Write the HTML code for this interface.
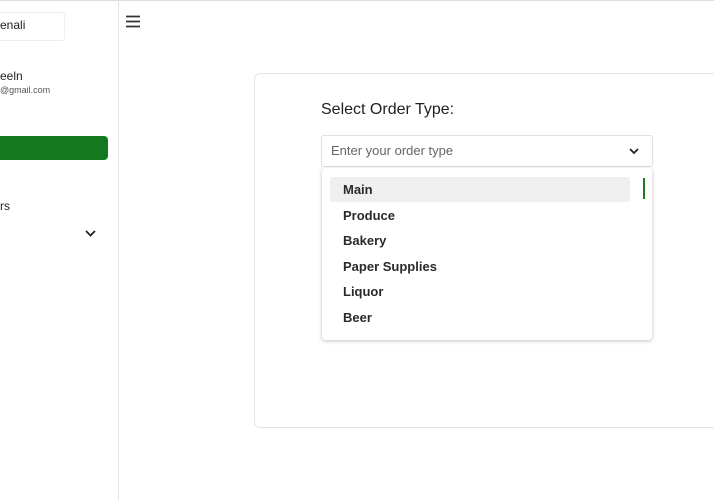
<!DOCTYPE html>
<html><head><style>
body{margin:0;width:714px;height:500px;background:#fff;font-family:"Liberation Sans",sans-serif;position:relative;overflow:hidden;color:#222}
.a{position:absolute}
</style></head><body>
<div class="a" style="left:0;top:0;width:714px;height:1px;background:#ddd"></div>
<div class="a" style="left:118px;top:0;width:1px;height:500px;background:#e2e2e2"></div>
<div class="a" style="left:-10px;top:12px;width:73px;height:27px;border:1px solid #eee;border-radius:3px"></div>
<div class="a" style="left:0;top:18px;font-size:12px">enali</div>
<div class="a" style="left:0;top:69px;font-size:12px">eeln</div>
<div class="a" style="left:0;top:85px;font-size:9px;color:#555">@gmail.com</div>
<div class="a" style="left:-10px;top:136px;width:118px;height:24px;background:#13781e;border-radius:4px"></div>
<div class="a" style="left:0;top:199px;font-size:12px">rs</div>
<svg class="a" style="left:84px;top:229px" width="13" height="9"><path d="M2 2l4.5 4.5L11 2" stroke="#222" stroke-width="1.8" fill="none"/></svg>
<svg class="a" style="left:126px;top:15px" width="15" height="13"><path d="M0 1.5h14M0 6.5h14M0 11.5h14" stroke="#333" stroke-width="1.8"/></svg>
<div class="a" style="left:254px;top:73px;width:480px;height:353px;border:1px solid #e4e4e4;border-radius:6px"></div>
<div class="a" style="left:321px;top:101px;font-size:16px;color:#222">Select Order Type:</div>
<div class="a" style="left:321px;top:135px;width:330px;height:30px;border:1px solid #e0e0e0;border-radius:3px"></div>
<div class="a" style="left:331px;top:143px;font-size:13px;color:#666">Enter your order type</div>
<svg class="a" style="left:628px;top:147px" width="12" height="8"><path d="M2 2l4 4 4-4" stroke="#222" stroke-width="1.8" fill="none"/></svg>
<div class="a" style="left:322px;top:168px;width:330px;height:172px;background:#fff;border-radius:4px;box-shadow:0 1px 4px rgba(0,0,0,.25)"></div>
<div class="a" style="left:330px;top:177px;width:300px;height:25px;background:#efefef;border-radius:3px"></div>
<div class="a" style="left:643px;top:178px;width:2px;height:21px;background:#1a7a25"></div>
<div class="a" style="left:343px;top:177px;font-size:13px;line-height:25.5px;font-weight:bold;color:#2a2a2a">Main<br>Produce<br>Bakery<br>Paper Supplies<br>Liquor<br>Beer</div>
</body></html>
